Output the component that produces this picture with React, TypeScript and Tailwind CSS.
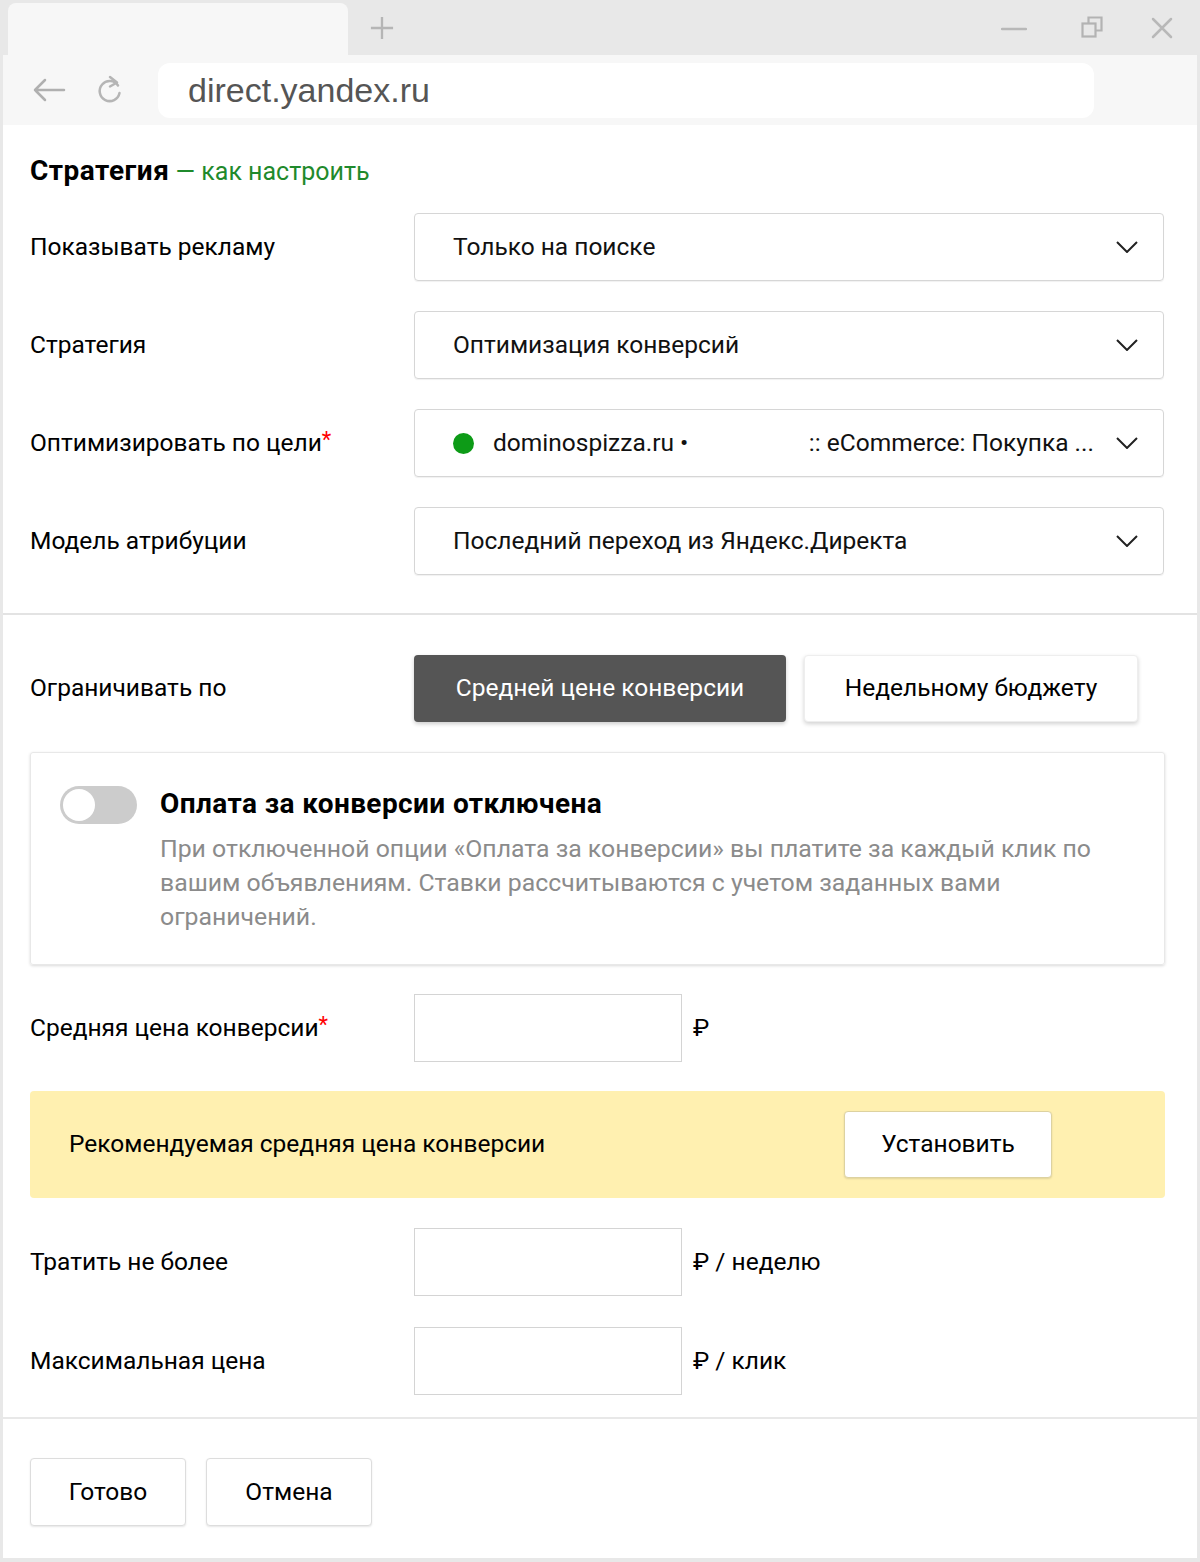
import React from "react";

const font = { fontFamily: "Roboto, 'Noto Sans', sans-serif" };

function Chevron() {
  return (
    <svg width="22" height="12" viewBox="0 0 22 12" fill="none">
      <path d="M1 1l10 10L21 1" stroke="#222" strokeWidth="2" />
    </svg>
  );
}

function Select({ children }: { children: React.ReactNode }) {
  return (
    <div className="flex h-[68px] flex-1 items-center rounded-[4px] border border-[#d6d6d6] pl-[38px] pr-[25px] shadow-[0_1px_1px_rgba(0,0,0,0.06)]">
      <div className="flex flex-1 items-center text-[24.5px] text-[#111]">{children}</div>
      <Chevron />
    </div>
  );
}

function Row({ label, req, children }: { label: string; req?: boolean; children: React.ReactNode }) {
  return (
    <div className="flex items-center">
      <div className="w-[384px] shrink-0 text-[24.5px] text-black">
        {label}
        {req && <span className="relative top-[-4px] text-[22px] text-[#ff0000]">*</span>}
      </div>
      {children}
    </div>
  );
}

function Input() {
  return <div className="h-[68px] w-[268px] border border-[#d4d4d4] bg-white" />;
}

export default function App() {
  return (
    <div className="w-[1200px] bg-[#e8e8e8] px-[3px] pb-[4px]" style={font}>
      {/* tab bar */}
      <div className="flex h-[55px] items-end">
        <div className="ml-[5px] h-[52px] w-[340px] rounded-t-[8px] bg-[#f7f7f7]" />
        <div className="ml-[22px] flex h-[52px] w-[24px] items-center justify-center pb-[2px]">
          <svg width="26" height="26" viewBox="0 0 26 26">
            <path d="M13 1v24M1 13h24" stroke="#b5b5b5" strokeWidth="2.5" />
          </svg>
        </div>
        <div className="flex-1" />
        <div className="flex h-[55px] items-center gap-0 pb-0">
          <svg width="26" height="6" viewBox="0 0 26 6" className="mr-[54px] mt-[2px]">
            <path d="M1 3h24" stroke="#b8b8b8" strokeWidth="2.5" strokeLinecap="round" />
          </svg>
          <svg width="24" height="24" viewBox="0 0 24 24" className="mr-[46px]">
            <rect x="1.5" y="7.5" width="13" height="13" fill="none" stroke="#b3b3b3" strokeWidth="2.2" />
            <path d="M7.5 7.5V1.5h13v13h-6" fill="none" stroke="#b3b3b3" strokeWidth="2.2" />
          </svg>
          <svg width="22" height="22" viewBox="0 0 22 22" className="mr-[24px]">
            <path d="M2 2l18 18M20 2L2 20" stroke="#b8b8b8" strokeWidth="2.5" strokeLinecap="round" />
          </svg>
        </div>
      </div>
      {/* toolbar */}
      <div className="flex h-[70px] items-center bg-[#f7f7f7]">
        <svg width="34" height="26" viewBox="0 0 34 26" className="ml-[29px]">
          <path d="M32 13H3M13 3L3 13l10 10" fill="none" stroke="#b0b0b0" strokeWidth="2.5" strokeLinecap="round" strokeLinejoin="round" />
        </svg>
        <svg width="28" height="30" viewBox="0 0 28 30" className="ml-[30px]">
          <path d="M22 10.5A10 10 0 1 0 23.5 18" fill="none" stroke="#b5b5b5" strokeWidth="2.5" strokeLinecap="round" />
          <path d="M14 2l7 5.5-7 4" fill="none" stroke="#b5b5b5" strokeWidth="2.5" strokeLinecap="round" strokeLinejoin="round" />
        </svg>
        <div
          className="ml-[34px] flex h-[55px] w-[936px] items-center rounded-[12px] bg-white pl-[30px] text-[34px] text-[#555]"
          style={{ fontFamily: "'Liberation Sans', Arial, sans-serif" }}
        >
          direct.yandex.ru
        </div>
      </div>
      {/* content */}
      <div className="bg-white">
        <div className="pl-[27px] pr-[33px] pb-[38px]">
          <div className="pt-[30px] text-[28px] leading-[32px]">
            <span className="font-bold tracking-[0.5px] text-black">Стратегия</span>
            <span className="text-[25px] text-[#1f8a2c]"> — как настроить</span>
          </div>
          <div className="mt-[25px] flex flex-col gap-[30px]">
            <Row label="Показывать рекламу">
              <Select>Только на поиске</Select>
            </Row>
            <Row label="Стратегия">
              <Select>Оптимизация конверсий</Select>
            </Row>
            <Row label="Оптимизировать по цели" req>
              <Select>
                <span className="mr-[19px] inline-block h-[21px] w-[21px] rounded-full bg-[#0d9b17]" />
                <span>dominospizza.ru •</span>
                <span className="ml-auto mr-[22px]">:: eCommerce: Покупка ...</span>
              </Select>
            </Row>
            <Row label="Модель атрибуции">
              <Select>Последний переход из Яндекс.Директа</Select>
            </Row>
          </div>
        </div>
        <div className="h-[2px] bg-[#e3e3e3]" />
        <div className="pl-[27px] pr-[32px] pt-[40px]">
          <Row label="Ограничивать по">
            <div className="flex h-[67px] w-[372px] items-center justify-center rounded-[4px] bg-[#555] text-[24.5px] text-white shadow-[0_2px_4px_rgba(0,0,0,0.2)]">
              Средней цене конверсии
            </div>
            <div className="ml-[18px] flex h-[67px] w-[334px] items-center justify-center rounded-[4px] border border-[#eee] bg-white text-[24.5px] text-black shadow-[0_2px_4px_rgba(0,0,0,0.18)]">
              Недельному бюджету
            </div>
          </Row>
          <div className="mt-[30px] flex h-[213px] rounded-[3px] border border-[#e8e8e8] pl-[29px] pt-[33px] shadow-[0_1px_3px_rgba(0,0,0,0.15)]">
            <div className="relative h-[38px] w-[77px] shrink-0 rounded-full bg-[#cccccc]">
              <div className="absolute left-[3px] top-[3px] h-[32px] w-[32px] rounded-full bg-white" />
            </div>
            <div className="ml-[23px]">
              <div className="text-[28px] font-bold leading-[36px] tracking-[0.4px] text-black">Оплата за конверсии отключена</div>
              <div className="mt-[10px] w-[960px] text-[24.8px] leading-[34px] text-[#8b8b8b]">
                При отключенной опции «Оплата за конверсии» вы платите за каждый клик по вашим объявлениям. Ставки рассчитываются с учетом заданных вами ограничений.
              </div>
            </div>
          </div>
          <div className="mt-[29px]">
            <Row label="Средняя цена конверсии" req>
              <Input />
              <span className="ml-[11px] text-[24.5px] text-black">₽</span>
            </Row>
          </div>
          <div className="mt-[29px] flex h-[107px] items-center rounded-[4px] bg-[#fff0b0] pl-[39px]">
            <div className="w-[775px] text-[24.5px] text-black">Рекомендуемая средняя цена конверсии</div>
            <div className="flex h-[67px] w-[208px] items-center justify-center rounded-[4px] border border-[#ddd2a0] bg-white text-[24.5px] text-black shadow-[0_1px_2px_rgba(0,0,0,0.12)]">
              Установить
            </div>
          </div>
          <div className="mt-[30px] flex flex-col gap-[31px] pb-[22px]">
            <Row label="Тратить не более">
              <Input />
              <span className="ml-[11px] text-[24.5px] text-black">₽ / неделю</span>
            </Row>
            <Row label="Максимальная цена">
              <Input />
              <span className="ml-[11px] text-[24.5px] text-black">₽ / клик</span>
            </Row>
          </div>
        </div>
        <div className="h-[2px] bg-[#e8e8e8]" />
        <div className="flex gap-[20px] pb-[32px] pl-[27px] pt-[39px]">
          <div className="flex h-[68px] w-[156px] items-center justify-center rounded-[4px] border border-[#ddd] bg-white text-[24.5px] text-black shadow-[0_1px_2px_rgba(0,0,0,0.1)]">
            Готово
          </div>
          <div className="flex h-[68px] w-[166px] items-center justify-center rounded-[4px] border border-[#ddd] bg-white text-[24.5px] text-black shadow-[0_1px_2px_rgba(0,0,0,0.1)]">
            Отмена
          </div>
        </div>
      </div>
    </div>
  );
}
